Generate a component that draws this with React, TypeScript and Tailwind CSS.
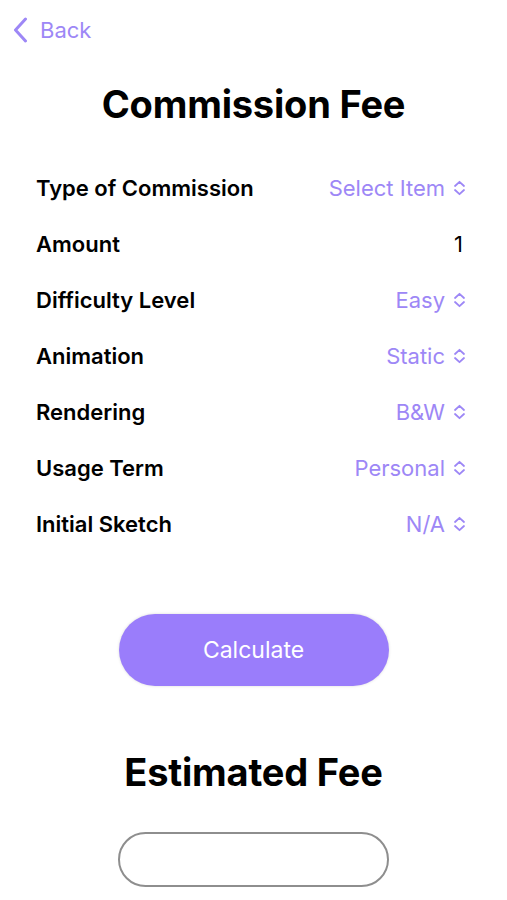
import React from "react";

const Chevrons = () => (
  <svg width="13" height="16" viewBox="0 0 13 16" fill="none" stroke="currentColor" strokeWidth="1.8" strokeLinecap="round" strokeLinejoin="round">
    <path d="M2 6 L6.5 1.8 L11 6" />
    <path d="M2 10 L6.5 14.2 L11 10" />
  </svg>
);

const rows: { label: string; value: string; picker: boolean }[] = [
  { label: "Type of Commission", value: "Select Item", picker: true },
  { label: "Amount", value: "1", picker: false },
  { label: "Difficulty Level", value: "Easy", picker: true },
  { label: "Animation", value: "Static", picker: true },
  { label: "Rendering", value: "B&W", picker: true },
  { label: "Usage Term", value: "Personal", picker: true },
  { label: "Initial Sketch", value: "N/A", picker: true },
];

export default function App() {
  return (
    <div
      className="w-[507px] h-[900px] bg-white overflow-hidden flex flex-col"
      style={{ fontFamily: "Inter, 'Noto Sans', sans-serif" }}
    >
      <div className="h-[60px] flex items-center pl-[13px] gap-[12px] text-[#9d87f6]">
        <svg width="15" height="26" viewBox="0 0 15 26" fill="none" stroke="currentColor" strokeWidth="3" strokeLinecap="round" strokeLinejoin="round">
          <path d="M12.5 2 L2.5 13 L12.5 24" />
        </svg>
        <span className="text-[22px] leading-none">Back</span>
      </div>
      <h1 className="mt-[24px] text-center text-[38px] leading-[40px] font-bold text-black tracking-[-0.2px]">Commission Fee</h1>
      <div className="mt-[36px] pl-[36px] pr-[41px] flex flex-col">
        {rows.map((r) => (
          <div key={r.label} className="h-[56px] flex items-center justify-between">
            <span className="text-[22px] font-semibold text-black">{r.label}</span>
            {r.picker ? (
              <span className="flex items-center gap-[8px] text-[22px] text-[#9d87f6]">
                {r.value}
                <Chevrons />
              </span>
            ) : (
              <span className="text-[22px] text-black pr-[3px]">{r.value}</span>
            )}
          </div>
        ))}
      </div>
      <div className="mt-[62px] flex justify-center">
        <button className="w-[270px] h-[72px] rounded-full bg-[#9a7dfb] text-white text-[23px] shadow-[0_0_3px_rgba(0,0,0,0.15)]">
          Calculate
        </button>
      </div>
      <h2 className="mt-[66px] text-center text-[38px] leading-[40px] font-bold text-black tracking-[-0.2px]">Estimated Fee</h2>
      <div className="mt-[40px] flex justify-center">
        <div className="w-[271px] h-[55px] rounded-full border-2 border-[#8e8e8e]" />
      </div>
    </div>
  );
}
